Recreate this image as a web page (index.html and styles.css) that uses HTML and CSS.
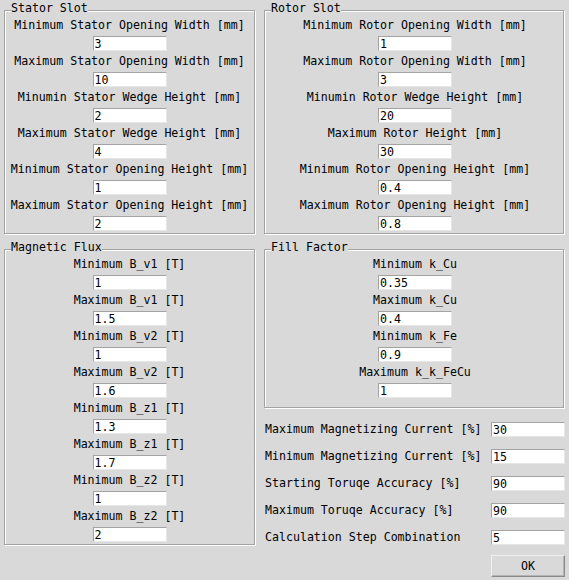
FILE: index.html
```html
<!DOCTYPE html>
<html>
<head>
<meta charset="utf-8">
<title>Parameters</title>
<link rel="stylesheet" href="styles.css">
</head>
<body>
<div class="app">
  <section class="group">
    <span class="title">Stator Slot</span>
    <div class="label">Minimum Stator Opening Width [mm]</div><input class="entry" value="3">
    <div class="label">Maximum Stator Opening Width [mm]</div><input class="entry" value="10">
    <div class="label">Minumin Stator Wedge Height [mm]</div><input class="entry" value="2">
    <div class="label">Maximum Stator Wedge Height [mm]</div><input class="entry" value="4">
    <div class="label">Minimum Stator Opening Height [mm]</div><input class="entry" value="1">
    <div class="label">Maximum Stator Opening Height [mm]</div><input class="entry" value="2">
  </section>
  <section class="group group-right">
    <span class="title">Rotor Slot</span>
    <div class="label">Minimum Rotor Opening Width [mm]</div><input class="entry" value="1">
    <div class="label">Maximum Rotor Opening Width [mm]</div><input class="entry" value="3">
    <div class="label">Minumin Rotor Wedge Height [mm]</div><input class="entry" value="20">
    <div class="label">Maximum Rotor Height [mm]</div><input class="entry" value="30">
    <div class="label">Minimum Rotor Opening Height [mm]</div><input class="entry" value="0.4">
    <div class="label">Maximum Rotor Opening Height [mm]</div><input class="entry" value="0.8">
  </section>
  <section class="group">
    <span class="title">Magnetic Flux</span>
    <div class="label">Minimum B_v1 [T]</div><input class="entry" value="1">
    <div class="label">Maximum B_v1 [T]</div><input class="entry" value="1.5">
    <div class="label">Minimum B_v2 [T]</div><input class="entry" value="1">
    <div class="label">Maximum B_v2 [T]</div><input class="entry" value="1.6">
    <div class="label">Minimum B_z1 [T]</div><input class="entry" value="1.3">
    <div class="label">Maximum B_z1 [T]</div><input class="entry" value="1.7">
    <div class="label">Minimum B_z2 [T]</div><input class="entry" value="1">
    <div class="label">Maximum B_z2 [T]</div><input class="entry" value="2">
  </section>
  <div class="side">
    <section class="group group-right fill">
      <span class="title">Fill Factor</span>
      <div class="label">Minimum k_Cu</div><input class="entry" value="0.35">
      <div class="label">Maximum k_Cu</div><input class="entry" value="0.4">
      <div class="label">Minimum k_Fe</div><input class="entry" value="0.9">
      <div class="label">Maximum k_k_FeCu</div><input class="entry" value="1">
    </section>
    <div class="params">
      <div class="row"><span class="row-label">Maximum Magnetizing Current [%]</span><input class="entry" value="30"></div>
      <div class="row"><span class="row-label">Minimum Magnetizing Current [%]</span><input class="entry" value="15"></div>
      <div class="row"><span class="row-label">Starting Toruqe Accuracy [%]</span><input class="entry" value="90"></div>
      <div class="row"><span class="row-label">Maximum Toruqe Accuracy [%]</span><input class="entry" value="90"></div>
      <div class="row"><span class="row-label">Calculation Step Combination</span><input class="entry" value="5"></div>
    </div>
    <button class="ok">OK</button>
  </div>
</div>
</body>
</html>
```

FILE: styles.css
```css
* { box-sizing: border-box; }
html, body { margin: 0; padding: 0; }
body {
  background: #d9d9d9;
  font-family: "DejaVu Sans Mono", monospace;
  font-size: 11.6px;
  color: #000;
  width: 569px;
  height: 580px;
  overflow: hidden;
}
.app {
  display: grid;
  grid-template-columns: 252px 301px;
  column-gap: 8px;
  row-gap: 14px;
  padding: 10px 4px 0 4px;
  align-items: start;
}
.group {
  position: relative;
  border: 1px solid #a3a3a3;
  box-shadow: 1px 1px 0 #fff, inset 1px 1px 0 #fff;
  margin: 0 1px 1px 0;
  padding: 4px 0 2px 0;
  display: flex;
  flex-direction: column;
  align-items: center;
}
.group-right { padding-left: 2px; }
.fill { padding-bottom: 9px; }
.title {
  position: absolute;
  left: 6px;
  top: -9px;
  line-height: 13px;
  background: #d9d9d9;
  white-space: pre;
}
.label {
  height: 21px;
  line-height: 21px;
  white-space: pre;
  text-align: center;
}
.entry {
  display: block;
  width: 74px;
  height: 15px;
  margin: 0;
  border: 1px solid;
  border-color: #a3a3a3 #e6e6e6 #e6e6e6 #a3a3a3;
  background: #fff;
  font: inherit;
  color: #000;
  line-height: 13px;
  padding: 0 1px;
  outline: none;
}
.side {
  display: flex;
  flex-direction: column;
}
.params {
  margin-top: 13px;
  display: flex;
  flex-direction: column;
  gap: 12px;
}
.row {
  display: flex;
  justify-content: space-between;
  align-items: center;
  height: 15px;
}
.row-label {
  line-height: 15px;
  white-space: pre;
  padding-left: 1px;
}
.ok {
  align-self: flex-end;
  margin-top: 10px;
  width: 74px;
  height: 22px;
  padding: 0;
  font: inherit;
  color: #000;
  background: #d9d9d9;
  border: 1px solid;
  border-color: #f0f0f0 #8a8a8a #8a8a8a #f0f0f0;
  box-shadow: inset -1px -1px 0 #b5b5b5;
}
```
